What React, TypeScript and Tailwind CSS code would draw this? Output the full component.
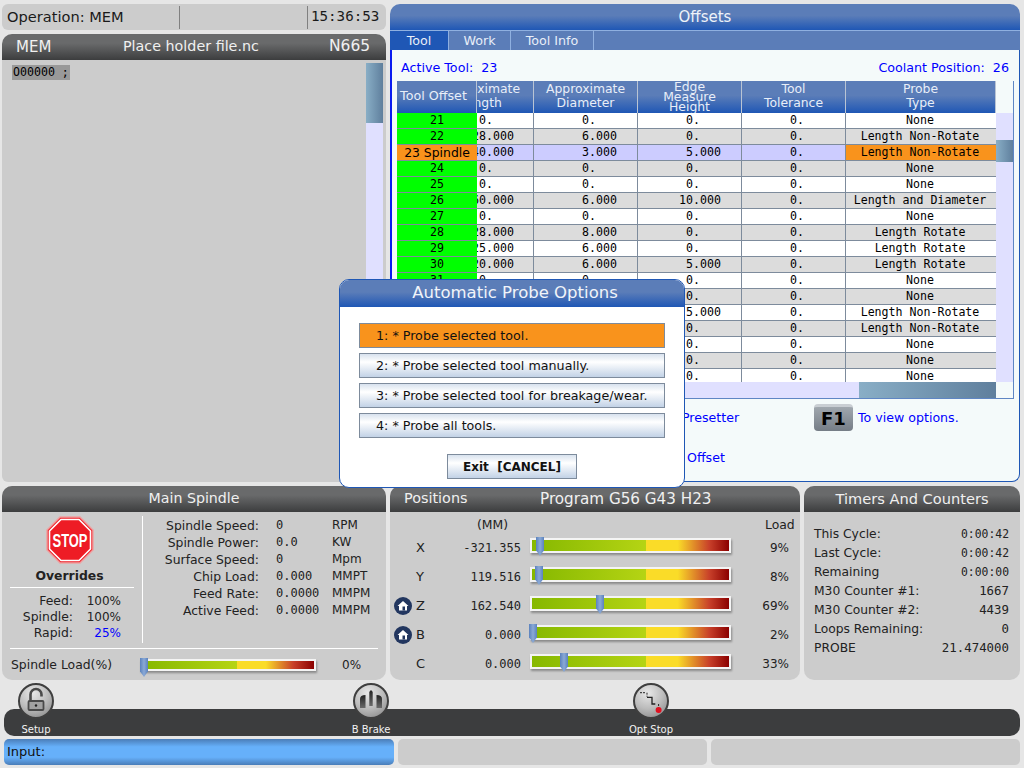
const sans = 'font-["DejaVu_Sans",sans-serif]'
const mono = 'font-["DejaVu_Sans_Mono",monospace]'

const darkTitle = 'bg-[linear-gradient(#696a6b_35%,#3c3d3e)]'
const blueTitle = 'bg-[linear-gradient(#5b7db8_45%,#1f57b5)]'
const thumb = 'bg-[linear-gradient(to_right,#89aec6,#5f7f9d)]'

const rows = [
  ['21', '0.', '0.', '0.', '0.', 'None'],
  ['22', '28.000', '6.000', '0.', '0.', 'Length Non-Rotate'],
  ['23 Spindle', '40.000', '3.000', '5.000', '0.', 'Length Non-Rotate'],
  ['24', '0.', '0.', '0.', '0.', 'None'],
  ['25', '0.', '0.', '0.', '0.', 'None'],
  ['26', '60.000', '6.000', '10.000', '0.', 'Length and Diameter'],
  ['27', '0.', '0.', '0.', '0.', 'None'],
  ['28', '28.000', '8.000', '0.', '0.', 'Length Rotate'],
  ['29', '25.000', '6.000', '0.', '0.', 'Length Rotate'],
  ['30', '20.000', '6.000', '5.000', '0.', 'Length Rotate'],
  ['31', '0.', '0.', '0.', '0.', 'None'],
  ['32', '0.', '0.', '0.', '0.', 'None'],
  ['33', '0.', '0.', '5.000', '0.', 'Length Non-Rotate'],
  ['34', '0.', '0.', '0.', '0.', 'Length Non-Rotate'],
  ['35', '0.', '0.', '0.', '0.', 'None'],
  ['36', '0.', '0.', '0.', '0.', 'None'],
  ['37', '0.', '0.', '0.', '0.', 'None'],
]

const grayRows = ['22', '24', '26', '28', '30', '32', '34', '36']

// numbers line up on the decimal point, not on the middle of the cell
function Num({ value, className }: { value: string; className: string }) {
  const [whole, frac] = value.split('.')
  return (
    <div className="flex whitespace-pre">
      <span className={`shrink-0 text-right ${className}`}>{whole}</span>
      <span>.{frac}</span>
    </div>
  )
}

function HeaderCell({ lines, className }: { lines: string[]; className: string }) {
  return (
    <div className={`flex flex-col items-center justify-center border-r border-[#b9c4d4] text-[12.4px] text-[#e8eef8] ${blueTitle} ${className}`}>
      {lines.map((l) => (
        <span key={l}>{l}</span>
      ))}
    </div>
  )
}

function OffsetTable() {
  const normal = 'pb-[2px] leading-[14px]'
  return (
    <div className="relative flex h-[318px] w-[617px] flex-col overflow-hidden border-r border-b border-[#5f86c4]">
      <div className="grid h-[32px] shrink-0 grid-cols-[80px_57px_104px_104px_104px_150px_17px]">
        <HeaderCell lines={['Tool Offset']} className="pr-[6px] pb-[2px] text-[12.7px] leading-[14px]" />
        <div className={`overflow-hidden border-r border-[#b9c4d4] ${blueTitle}`}>
          <div className="ml-[-48px] flex h-full w-[103px] flex-col items-center justify-center pb-[2px] text-[12.4px] leading-[14px] text-[#e8eef8]">
            <span>Approximate</span>
            <span>Length</span>
          </div>
        </div>
        <HeaderCell lines={['Approximate', 'Diameter']} className={normal} />
        <HeaderCell lines={['Edge', 'Measure', 'Height']} className="leading-[10px]" />
        <HeaderCell lines={['Tool', 'Tolerance']} className={normal} />
        <HeaderCell lines={['Probe', 'Type']} className={normal} />
        <div />
      </div>
      <div className="flex h-[269px] shrink-0 overflow-hidden">
        <div className={`w-[599px] shrink-0 text-[11.6px] text-black ${mono}`}>
          {rows.map((r) => {
            const active = r[0] === '23 Spindle'
            const rowBg = active ? 'bg-[#ccccff]' : grayRows.includes(r[0]) ? 'bg-[#dcdcdc]' : 'bg-white'
            return (
              <div key={r[0]} className={`grid h-4 grid-cols-[80px_57px_104px_104px_104px_150px] border-b border-[#7d8b9c] leading-[15px] ${rowBg}`}>
                <div className={`text-center ${active ? `bg-[#f9931c] text-[12.4px] ${sans}` : 'bg-[#00ff00]'}`}>{r[0]}</div>
                <div className="overflow-hidden border-r border-[#7d8b9c]">
                  <div className="ml-[-47px]"><Num value={r[1]} className="w-[56px]" /></div>
                </div>
                <div className="border-r border-[#7d8b9c]"><Num value={r[2]} className="w-[55px]" /></div>
                <div className="border-r border-[#7d8b9c]"><Num value={r[3]} className="w-[55px]" /></div>
                <div className="border-r border-[#7d8b9c]"><Num value={r[4]} className="w-[55px]" /></div>
                <div className={`pr-[2px] text-center ${active ? 'bg-[#f9931c]' : ''}`}>{r[5]}</div>
              </div>
            )
          })}
        </div>
        <div className="flex w-[17px] flex-col bg-[#e0e0ff] pt-[27px]">
          <div className={`h-[22px] ${thumb}`} />
        </div>
      </div>
      <div className="flex h-4 shrink-0">
        <div className="w-[462px] bg-[#e0e0ff]" />
        <div className={`w-[137px] ${thumb}`} />
      </div>
    </div>
  )
}

function Offsets() {
  return (
    <section className={`flex h-[478px] w-[630px] flex-col ${sans}`}>
      <div className={`flex h-[26px] items-center justify-center rounded-t-[10px] text-[15px] text-[#eef2f8] ${blueTitle}`}>Offsets</div>
      <div className="flex h-[20px] bg-[#5b7db8] text-[12.7px] text-[#e8eef8]">
        <div className="flex w-[59px] items-center justify-center border-r border-t border-[#8fb0e0] bg-[#1f57b5]">Tool</div>
        <div className="flex w-[62px] items-center justify-center border-r border-t border-[#8fb0e0]">Work</div>
        <div className="flex w-[83px] items-center justify-center border-r border-t border-[#8fb0e0]">Tool Info</div>
        <div className="flex-1 border-t border-[#8fb0e0]" />
      </div>
      <div className="flex flex-1 flex-col rounded-br-[8px] border-r border-b border-l-2 border-[#1f57b5] border-l-[#0a1cf0] bg-[#f4fafa] pl-[5px]">
        <div className="flex h-[31px] items-center justify-between pt-[4px] pr-[10px] pl-[4px] text-[12.7px] text-[#0000ff]">
          <span className="whitespace-pre">Active Tool:  23</span>
          <span className="whitespace-pre">Coolant Position:  26</span>
        </div>
        <OffsetTable />
        <div className="flex h-[33px] items-start pt-[5px] text-[12.6px] leading-[16px] text-[#0000ff]">
          <span className="mt-[6px] ml-[285px] w-[132px]">Presetter</span>
          <div className="flex h-[27px] w-[39px] items-center justify-center rounded-[4px] border-t-[3px] border-[#c9ced3] bg-[linear-gradient(#a0a7ae,#757d86)] text-[18px] font-bold text-black">F1</div>
          <span className="mt-[6px] ml-[5px]">To view options.</span>
        </div>
        <div className="mt-[18px] ml-[290px] text-[12.6px] leading-[16px] text-[#0000ff]">Offset</div>
      </div>
    </section>
  )
}

function ProgramColumn() {
  return (
    <div className={`flex h-[478px] w-[384px] flex-col gap-1 ${sans}`}>
      <div className="grid h-[26px] grid-cols-[177px_129px_78px] items-center rounded-[6px] bg-[#cccccc] text-[14.6px] text-[#1a1a1a]">
        <span className="pl-[5px]">Operation: MEM</span>
        <span className="h-[23px] border-x border-[#808080]" />
        <span className={`pl-[3px] text-[14.2px] ${mono}`}>15:36:53</span>
      </div>
      <div className="flex flex-1 flex-col">
        <div className={`flex h-[26px] items-center rounded-t-[10px] pl-[14px] text-[15px] text-[#f0f0f0] ${darkTitle}`}>
          <span className="w-[107px]">MEM</span>
          <span className="w-[206px] text-[14.3px]">Place holder file.nc</span>
          <span className="text-[15.5px]">N665</span>
        </div>
        <div className="flex flex-1 justify-between rounded-b-[6px] bg-[#cccccc] pt-[3px] pr-[3px] pl-[10px]">
          <div className="pt-[2px]">
            <span className={`block h-[15px] bg-[#999999] px-[1px] text-[11.6px] leading-[15px] whitespace-pre text-black ${mono}`}>O00000 ;</span>
          </div>
          <div className="flex w-[17px] flex-col bg-[#e0e0ff]">
            <div className={`h-[60px] ${thumb}`} />
          </div>
        </div>
      </div>
    </div>
  )
}

function Knob({ left }: { left: number }) {
  return (
    <svg className="absolute top-[-3px]" style={{ left }} width="8" height="19" viewBox="0 0 8 20" preserveAspectRatio="none">
      <defs>
        <linearGradient id="kn" x1="0" x2="1" y1="0" y2="0">
          <stop offset="0" stopColor="#5b82bd" />
          <stop offset="0.5" stopColor="#8aa9d6" />
          <stop offset="1" stopColor="#5b82bd" />
        </linearGradient>
      </defs>
      <path d="M0 0H8V14L4 20L0 14Z" fill="url(#kn)" />
    </svg>
  )
}

function Gauge({ className, value }: { className: string; value: number }) {
  return (
    <div className={`relative border-2 border-[#f4f4f4] shadow-[1px_2px_2px_#8a8a8a] ${className}`}>
      <Knob left={value} />
    </div>
  )
}

function MainSpindle() {
  const overrides = [
    ['Feed:', '100%', 'text-[#222]'],
    ['Spindle:', '100%', 'text-[#222]'],
    ['Rapid:', '25%', 'text-[#0000ff]'],
  ]
  const stats = [
    ['Spindle Speed:', '0', 'RPM'],
    ['Spindle Power:', '0.0', 'KW'],
    ['Surface Speed:', '0', 'Mpm'],
    ['Chip Load:', '0.000', 'MMPT'],
    ['Feed Rate:', '0.0000', 'MMPM'],
    ['Active Feed:', '0.0000', 'MMPM'],
  ]
  return (
    <section className="flex h-[194px] w-[384px] flex-col overflow-hidden rounded-[10px] bg-[#cccccc] text-[12.4px] text-[#222]">
      <div className={`flex h-[26px] shrink-0 items-center justify-center text-[14.2px] text-[#f0f0f0] ${darkTitle}`}>Main Spindle</div>
      <div className="mt-[4px] flex h-[127px] pl-2">
        <div className="flex w-[124px] shrink-0 flex-col items-center">
          <svg className="mr-[5px]" width="48" height="48" viewBox="0 0 48 48">
            <path d="M14 1H34L47 14V34L34 47H14L1 34V14Z" fill="#ee1c25" stroke="#eea0a0" strokeWidth="1.5" />
            <path d="M15 3.5H33L44.5 15V33L33 44.5H15L3.5 33V15Z" fill="none" stroke="#fff" strokeWidth="1.6" />
            <text x="24" y="31" textAnchor="middle" fontFamily="Liberation Sans" fontWeight="700" fontSize="19" fill="#fff" textLength="35" lengthAdjust="spacingAndGlyphs">STOP</text>
          </svg>
          <div className="mt-[4px] mr-[5px] font-bold leading-[16px] text-[#222]">Overrides</div>
          <div className="mt-[3px] w-full border-t border-white" />
          <div className="mt-[5px] w-full">
            {overrides.map(([label, value, color]) => (
              <div key={label} className="grid h-4 grid-cols-[63px_48px] leading-[16px]">
                <span className="text-right">{label}</span>
                <span className={`text-right text-[12px] ${color}`}>{value}</span>
              </div>
            ))}
          </div>
        </div>
        <div className="ml-[8px] border-l border-white" />
        <div className="pt-[1px]">
          {stats.map(([label, value, unit]) => (
            <div key={label} className="grid h-[17px] grid-cols-[116px_73px_48px] leading-[17px]">
              <span className="text-right whitespace-nowrap">{label}</span>
              <span className={`pl-[17px] text-[12px] ${mono}`}>{value}</span>
              <span className="text-[12px]">{unit}</span>
            </div>
          ))}
        </div>
      </div>
      <div className="mx-2 mt-[5px] border-t border-white" />
      <div className="mt-[7px] flex items-center pl-[9px]">
        <span className="w-[129px]">Spindle Load(%)</span>
        <Gauge className="h-[12px] w-[176px] bg-[linear-gradient(to_right,#86b800,#b5d414_55%,#fadc28_55%,#fadc28_72%,#c8402a_88%,#8b0000)]" value={-2} />
        <span className="ml-[26px] text-[12px]">0%</span>
      </div>
    </section>
  )
}

function HomeIcon() {
  return (
    <svg width="18" height="18" viewBox="0 0 18 18">
      <circle cx="9" cy="9" r="9" fill="#22365f" />
      <path d="M9 4L14.5 9H13V13.5H5V9H3.5Z" fill="#fff" />
      <rect x="8.5" y="9.5" width="2.5" height="4" fill="#22365f" />
    </svg>
  )
}

function Positions() {
  const axes = [
    { name: 'X', value: '-321.355', load: 9, home: false },
    { name: 'Y', value: '119.516', load: 8, home: false },
    { name: 'Z', value: '162.540', load: 69, home: true },
    { name: 'B', value: '0.000', load: 2, home: true },
    { name: 'C', value: '0.000', load: 33, home: false },
  ]
  return (
    <section className="flex h-[194px] w-[410px] flex-col overflow-hidden rounded-[10px] bg-[#cccccc] text-[12.4px] text-[#222]">
      <div className={`flex h-[26px] shrink-0 items-center pl-[14px] text-[15.2px] text-[#f0f0f0] ${darkTitle}`}>
        <span className="w-[136px] text-[14.4px]">Positions</span>
        <span>Program G56 G43 H23</span>
      </div>
      <div className="flex h-[21px] items-end leading-[16px]">
        <span className="ml-[87px] w-[288px]">(MM)</span>
        <span>Load</span>
      </div>
      <div className="flex flex-col">
        {axes.map((a) => (
          <div key={a.name} className="flex h-[29px] items-center">
            <span className="ml-1 w-[20px]">{a.home && <HomeIcon />}</span>
            <span className="ml-[2px] w-[18px] text-[13px]">{a.name}</span>
            <span className={`w-[87px] text-right text-[12px] ${mono}`}>{a.value}</span>
            <div className="mb-[5px] ml-[9px]">
              <Gauge className="h-[15px] w-[201px] bg-[linear-gradient(to_right,#86b800,#b5d414_58%,#fadc28_58%,#fadc28_74%,#c8402a_90%,#8b0000)]" value={a.load - 5} />
            </div>
            <span className="w-[58px] text-right text-[12px]">{a.load}%</span>
          </div>
        ))}
      </div>
    </section>
  )
}

function Timers() {
  const items = [
    ['This Cycle:', '0:00:42', 'text-[11.4px]'],
    ['Last Cycle:', '0:00:42', 'text-[11.4px]'],
    ['Remaining', '0:00:00', 'text-[11.4px]'],
    ['M30 Counter #1:', '1667', 'text-[12.4px]'],
    ['M30 Counter #2:', '4439', 'text-[12.4px]'],
    ['Loops Remaining:', '0', 'text-[12.4px]'],
    ['PROBE', '21.474000', 'text-[12.4px]'],
  ]
  return (
    <section className="flex h-[194px] w-[216px] flex-col overflow-hidden rounded-[10px] bg-[#cccccc] text-[12.3px] text-[#222]">
      <div className={`flex h-[26px] shrink-0 items-center justify-center text-[14.6px] text-[#f0f0f0] ${darkTitle}`}>Timers And Counters</div>
      <div className="mt-[13px] flex flex-col pr-[11px] pl-[10px]">
        {items.map(([label, value, size]) => (
          <div key={label} className="flex h-[19px] items-center justify-between">
            <span>{label}</span>
            <span className={`${size} ${mono}`}>{value}</span>
          </div>
        ))}
      </div>
    </section>
  )
}

function RoundButton({ label, className, children }: { label: string; className: string; children: React.ReactNode }) {
  return (
    <div className={`absolute top-[-26px] flex w-[80px] flex-col items-center ${className}`}>
      <div className="size-[36px] rounded-full border-2 border-[#3f3f3f] bg-[radial-gradient(circle_at_40%_25%,#e8e8e8,#bcbcbc_50%,#808080)]">{children}</div>
      <span className="mt-[5px] text-[10px] leading-[12px] text-[#f2f2f2]">{label}</span>
    </div>
  )
}

function Toolbar() {
  return (
    <div className={`relative mx-1 mt-[29px] h-[27px] rounded-[10px] bg-[#3c3d3e] ${sans}`}>
      <RoundButton label="Setup" className="left-[-8px]">
        <svg width="32" height="32" viewBox="0 0 32 32" fill="none" stroke="#4a4a4a">
          <path d="M10.5 16V9.5a5.5 5.5 0 0 1 11 0v2" strokeWidth="2.6" />
          <rect x="8.5" y="16" width="15" height="9" rx="1" strokeWidth="1.8" fill="#a2a2a2" />
          <circle cx="16" cy="20.5" r="1.2" fill="#222" stroke="none" />
        </svg>
      </RoundButton>
      <RoundButton label="B Brake" className="left-[327px]">
        <svg width="32" height="32" viewBox="0 0 32 32">
          <defs>
            <linearGradient id="bar" x1="0" x2="0" y1="0" y2="1">
              <stop offset="0" stopColor="#222" />
              <stop offset="1" stopColor="#6a6a6a" />
            </linearGradient>
          </defs>
          <path d="M5 23V14Q5 10 10.5 10V23Z" fill="url(#bar)" />
          <path d="M14.3 21V7Q16 3.5 17.7 7V21Z" fill="url(#bar)" />
          <path d="M27 23V14Q27 10 21.5 10V23Z" fill="url(#bar)" />
        </svg>
      </RoundButton>
      <RoundButton label="Opt Stop" className="left-[607px]">
        <svg width="32" height="32" viewBox="0 0 32 32" fill="none" stroke="#222">
          <path d="M5 7.7H10.5M12 7.7V11.7" strokeWidth="1" strokeDasharray="2 1" />
          <path d="M12 12.3H17V19H20.3" strokeWidth="1.3" />
          <path d="M23.6 19V22.3" strokeWidth="1" strokeDasharray="2 1" />
          <circle cx="23.6" cy="25" r="3" fill="#e01020" stroke="none" />
        </svg>
      </RoundButton>
    </div>
  )
}

function InputRow() {
  return (
    <div className={`mx-1 mt-[3px] flex h-[26px] gap-1 text-[13px] text-[#111] ${sans}`}>
      <div className="flex w-[390px] items-center rounded-[5px] bg-[linear-gradient(#4a7db8,#66b0fa_30%,#66b0fa_70%,#4a7db8)] pl-[3px]">Input:</div>
      <div className="w-[309px] rounded-[5px] bg-[#cccccc]" />
      <div className="w-[309px] rounded-[5px] bg-[#cccccc]" />
    </div>
  )
}

const optionButton = 'flex h-[25px] items-center border border-[#7d8b9c] pl-[16px]'
const optionFill = 'bg-[linear-gradient(#d8e2ee,#ffffff_35%,#c2d2e6)]'

function ProbeDialog() {
  const options = ['2: * Probe selected tool manually.', '3: * Probe selected tool for breakage/wear.', '4: * Probe all tools.']
  return (
    <div className={`absolute top-[279px] left-[339px] flex h-[209px] w-[346px] flex-col overflow-hidden rounded-[10px] border border-[#1f57b5] bg-white text-[12.7px] text-[#111] ${sans}`}>
      <div className={`flex h-[27px] shrink-0 items-center justify-center pl-[6px] text-[16.5px] text-[#f0f4fa] ${blueTitle}`}>Automatic Probe Options</div>
      <div className="mt-4 flex flex-col gap-[5px] px-[19px]">
        <div className={`${optionButton} bg-[#f9931c]`}>1: * Probe selected tool.</div>
        {options.map((o) => (
          <div key={o} className={`${optionButton} ${optionFill}`}>{o}</div>
        ))}
      </div>
      <div className={`mx-auto mt-[16px] flex h-[25px] w-[130px] items-center justify-center border border-[#7d8b9c] text-[12px] font-bold whitespace-pre ${optionFill}`}>Exit  [CANCEL]</div>
    </div>
  )
}

export default function App() {
  return (
    <div className="relative h-[768px] w-[1024px] overflow-hidden bg-[#e6e6e6]">
      <div className="flex gap-1 pt-1 pl-[2px]">
        <ProgramColumn />
        <Offsets />
      </div>
      <div className={`mt-1 flex gap-1 pl-[2px] ${sans}`}>
        <MainSpindle />
        <Positions />
        <Timers />
      </div>
      <Toolbar />
      <InputRow />
      <ProbeDialog />
    </div>
  )
}
